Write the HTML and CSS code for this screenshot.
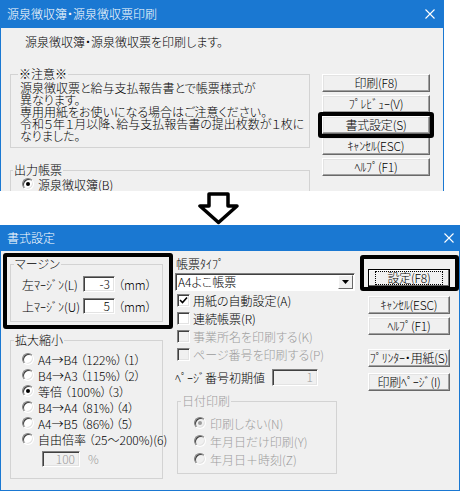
FILE: index.html
```html
<!DOCTYPE html>
<html lang="ja">
  <head>
    <meta charset="UTF-8" />
    <meta name="viewport" content="width=device-width, initial-scale=1.0" />
    <title>書式設定</title>
    <link rel="stylesheet" href="styles.css">
  </head>
  <body>
    <!-- 印刷ダイアログ（上） -->
    <div class="dlg dlg-print">
      <div class="titlebar">
        <span>源泉徴収簿・源泉徴収票印刷</span>
        <svg class="close" width="10" height="10" viewBox="0 0 10 10"><path d="M0.5 0.5L9.5 9.5M9.5 0.5L0.5 9.5" stroke="#fff" stroke-width="1.1"/></svg>
      </div>
      <div class="print-body">
        <p class="lead">源泉徴収簿・源泉徴収票を印刷します。</p>
        <div class="print-left">
          <fieldset class="group notes">
            <legend>※注意※</legend>
            <p>源泉徴収票と給与支払報告書とで帳票様式が<br>異なります。<br>専用用紙をお使いになる場合はご注意ください。<br>令和５年１月以降、給与支払報告書の提出枚数が１枚に<br>なりました。</p>
          </fieldset>
          <fieldset class="group output">
            <legend>出力帳票</legend>
            <div class="opt"><span class="rb on"></span>源泉徴収簿(B)</div>
          </fieldset>
        </div>
        <div class="btns">
          <button class="btn">印刷(F8)</button>
          <button class="btn">ﾌﾟﾚﾋﾞｭｰ(V)</button>
          <button class="btn">書式設定(S)</button>
          <button class="btn">ｷｬﾝｾﾙ(ESC)</button>
          <button class="btn">ﾍﾙﾌﾟ(F1)</button>
        </div>
      </div>
      <div class="mark mark-fmt"></div>
    </div>

    <div class="arrow">
      <svg width="42" height="34" viewBox="0 0 42 34"><path d="M11 3H30V15H39L20.5 31.5L2 15H11Z" fill="#fff" stroke="#000" stroke-width="3.5" stroke-linejoin="round"/></svg>
    </div>

    <!-- 書式設定ダイアログ（下） -->
    <div class="dlg dlg-fmt">
      <div class="titlebar">
        <span>書式設定</span>
        <svg class="close" width="10" height="10" viewBox="0 0 10 10"><path d="M0.5 0.5L9.5 9.5M9.5 0.5L0.5 9.5" stroke="#fff" stroke-width="1.1"/></svg>
      </div>
      <div class="fmt-body">
        <div class="col-left">
          <fieldset class="group margin">
            <legend>マージン</legend>
            <div class="mrow">
              <span class="mlabel">左ﾏｰｼﾞﾝ(L)</span>
              <span class="edit">-3</span>
              <span class="unit">（mm）</span>
            </div>
            <div class="mrow">
              <span class="mlabel">上ﾏｰｼﾞﾝ(U)</span>
              <span class="edit">5</span>
              <span class="unit">（mm）</span>
            </div>
          </fieldset>
          <fieldset class="group scale">
            <legend>拡大縮小</legend>
            <div class="opt"><span class="rb"></span>A4→B4 （122%）（1）</div>
            <div class="opt"><span class="rb"></span>B4→A3 （115%）（2）</div>
            <div class="opt"><span class="rb on"></span>等倍 （100%）（3）</div>
            <div class="opt"><span class="rb"></span>B4→A4 （81%）（4）</div>
            <div class="opt"><span class="rb"></span>A4→B5 （86%）（5）</div>
            <div class="opt"><span class="rb"></span>自由倍率 （25～200%)(6)</div>
            <div class="pct">
              <span class="edit off">100</span>
              <span class="unit off">%</span>
            </div>
          </fieldset>
        </div>

        <div class="col-mid">
          <div class="cap">帳票ﾀｲﾌﾟ</div>
          <div class="select">
            <span class="select-text">A4よこ帳票</span>
            <span class="select-btn"><svg width="7" height="4" viewBox="0 0 7 4"><path d="M0 0H7L3.5 4Z" fill="#000"/></svg></span>
          </div>
          <div class="chk"><span class="cb on"><svg width="9" height="9" viewBox="0 0 9 9"><path d="M1 4L3.5 6.5L8 1.5" fill="none" stroke="#000" stroke-width="1.6"/></svg></span>用紙の自動設定(A)</div>
          <div class="chk"><span class="cb"></span>連続帳票(R)</div>
          <div class="chk off"><span class="cb"></span>事業所名を印刷する(K)</div>
          <div class="chk off"><span class="cb"></span>ページ番号を印刷する(P)</div>
          <div class="pageno">
            <span class="pageno-label">ﾍﾟｰｼﾞ番号初期値</span>
            <span class="edit off">1</span>
          </div>
          <fieldset class="group date off">
            <legend>日付印刷</legend>
            <div class="opt"><span class="rb on"></span>印刷しない(N)</div>
            <div class="opt"><span class="rb"></span>年月日だけ印刷(Y)</div>
            <div class="opt"><span class="rb"></span>年月日＋時刻(Z)</div>
          </fieldset>
        </div>

        <div class="col-right">
          <button class="btn btn-default"><span class="focus">設定(F8)</span></button>
          <button class="btn btn-cancel">ｷｬﾝｾﾙ(ESC)</button>
          <button class="btn btn-help">ﾍﾙﾌﾟ(F1)</button>
          <button class="btn btn-printer">ﾌﾟﾘﾝﾀｰ・用紙(S)</button>
          <button class="btn btn-page">印刷ﾍﾟｰｼﾞ(I)</button>
        </div>
      </div>
      <div class="mark mark-margin"></div>
      <div class="mark mark-ok"></div>
    </div>
  </body>
</html>
```

FILE: styles.css
```css
body {
  margin: 0;
  background-color: #fff;
  font-family: "Noto Sans CJK JP", sans-serif;
  font-size: 12px;
  font-weight: 300;
  color: #000;
  font-feature-settings: "palt";
}
p {
  margin: 0;
}
/* Window frame */
.dlg {
  position: relative;
  box-sizing: border-box;
  background-color: #f0f0f0;
  border: 1px solid #1a78d2;
  border-top: none;
  overflow: hidden;
}
.titlebar {
  display: flex;
  align-items: center;
  justify-content: space-between;
  background-color: #1a78d2;
  color: #fff;
  padding: 0 9px 0 7px;
  margin: 0 -1px;
  line-height: 14px;
}
.close {
  display: block;
}
.dlg-print {
  width: 444px;
  height: 191px;
  border-bottom: none;
}
.dlg-print .titlebar {
  height: 28px;
}
.dlg-fmt {
  width: 460px;
  height: 266px;
}
.dlg-fmt .titlebar {
  height: 26px;
  padding-right: 6px;
}
/* Group boxes */
.group {
  margin: 0;
  min-width: 0;
  border: 1px solid #d3d3d3;
  box-sizing: border-box;
}
.group legend {
  padding: 0 1px;
  line-height: 14px;
}
.opt {
  display: flex;
  align-items: center;
  white-space: nowrap;
}
.rb {
  box-sizing: border-box;
  position: relative;
  width: 12px;
  height: 12px;
  margin-right: 4px;
  border-radius: 50%;
  background-color: #fff;
  border: 1px solid;
  border-color: #808080 #fff #fff #808080;
  box-shadow: inset 1px 1px #404040, inset -1px -1px #e3e3e3;
  flex: none;
}
.rb.on::after {
  content: "";
  position: absolute;
  left: 3px;
  top: 3px;
  width: 4px;
  height: 4px;
  border-radius: 50%;
  background-color: #000;
}
.cb {
  box-sizing: border-box;
  display: flex;
  align-items: center;
  justify-content: center;
  width: 13px;
  height: 13px;
  margin-right: 3px;
  background-color: #fff;
  border: 1px solid;
  border-color: #808080 #fff #fff #808080;
  box-shadow: inset 1px 1px #404040, inset -1px -1px #e3e3e3;
  flex: none;
}
.edit {
  box-sizing: border-box;
  display: block;
  height: 16px;
  background-color: #fff;
  border: 1px solid;
  border-color: #808080 #fff #fff #808080;
  box-shadow: inset 1px 1px #404040, inset -1px -1px #e3e3e3;
  text-align: right;
  padding-right: 4px;
  line-height: 14px;
}
.off,
.off legend,
.off .opt {
  color: #9c9c9c;
}
.edit.off {
  background-color: #f0f0f0;
}
.off .rb,
.off .cb {
  background-color: #f0f0f0;
}
.off .rb.on::after {
  background-color: #9c9c9c;
}
/* Buttons */
.btn {
  box-sizing: border-box;
  display: flex;
  align-items: center;
  justify-content: center;
  height: 18px;
  padding: 0;
  background-color: #f0f0f0;
  border: 1px solid;
  border-color: #fff #696969 #696969 #fff;
  box-shadow: inset -1px -1px #a0a0a0, inset 1px 1px #e3e3e3;
  font: 300 12px "Noto Sans CJK JP", sans-serif;
  font-feature-settings: "palt";
  line-height: 14px;
  color: #000;
  white-space: nowrap;
  letter-spacing: -0.2px;
}
/* Highlight frames */
.mark {
  position: absolute;
  box-sizing: border-box;
  border: 4px solid #000;
  border-radius: 3px;
  pointer-events: none;
}
.mark-fmt {
  left: 317px;
  top: 112px;
  width: 116px;
  height: 26px;
}
.mark-margin {
  left: 2px;
  top: 28px;
  width: 170px;
  height: 76px;
}
.mark-ok {
  left: 359px;
  top: 30px;
  width: 99px;
  height: 36px;
}
/* Upper dialog */
.print-body {
  display: grid;
  grid-template-columns: 300px 108px;
  column-gap: 12px;
  padding: 7px 0 0 9px;
}
.lead {
  grid-column: 1 / -1;
  margin: 0 0 18px 15px;
  line-height: 14px;
}
.notes {
  padding: 1px 4px 5px 9px;
}
.notes legend {
  margin-left: -2px;
}
.notes p {
  line-height: 12px;
  white-space: nowrap;
}
.output {
  margin-top: 15px;
  padding: 0 4px 10px 11px;
}
.output legend {
  margin-left: -9px;
}
.output .opt {
  height: 16px;
  margin-top: -1px;
}
.btns {
  display: flex;
  flex-direction: column;
  gap: 3px;
  margin-top: 7px;
}
.btns .btn {
  width: 108px;
}
/* Lower dialog */
.fmt-body {
  display: grid;
  grid-template-columns: 153px 180px 82px;
  column-gap: 12px;
  padding: 6px 0 0 9px;
}
.col-right {
  margin-left: 1px;
}
.margin {
  padding: 5px 4px 7px 11px;
}
.margin legend,
.scale legend {
  margin-left: -8px;
}
.mrow {
  display: flex;
  align-items: center;
  height: 16px;
}
.mrow + .mrow {
  margin-top: 6px;
}
.mlabel {
  width: 61px;
}
.mrow .edit {
  width: 32px;
}
.unit {
  margin-left: 3px;
}
.scale {
  margin-top: 11px;
  padding: 4px 4px 11px 11px;
}
.scale .opt {
  height: 16px;
}
.pct {
  display: flex;
  align-items: center;
  margin: 3px 0 0 20px;
}
.pct .edit {
  width: 38px;
}
.pct .unit {
  margin-left: 8px;
}
.cap {
  line-height: 14px;
  margin-left: 1px;
}
.select {
  box-sizing: border-box;
  display: flex;
  align-items: center;
  height: 18px;
  margin-top: 2px;
  background-color: #fff;
  border: 1px solid;
  border-color: #808080 #fff #fff #808080;
  box-shadow: inset 1px 1px #404040;
}
.select-text {
  flex: 1;
  padding: 0 0 0 2px;
  line-height: 14px;
}
.select-btn {
  box-sizing: border-box;
  display: flex;
  align-items: center;
  justify-content: center;
  width: 15px;
  height: 14px;
  margin-right: 1px;
  background-color: #f0f0f0;
  border: 1px solid;
  border-color: #fff #696969 #696969 #fff;
}
.chk {
  display: flex;
  align-items: center;
  height: 18px;
  padding-left: 2px;
  white-space: nowrap;
}
.chk:first-of-type {
  margin-top: 3px;
}
.pageno {
  display: flex;
  align-items: center;
  height: 18px;
  margin-top: 5px;
}
.pageno-label {
  width: 97px;
}
.pageno .edit {
  width: 46px;
  height: 17px;
}
.date {
  width: 160px;
  margin: 8px 0 0 2px;
  padding: 6px 4px 5px 16px;
}
.date legend {
  margin-left: -13px;
}
.date .opt {
  height: 18px;
}
.col-right .btn {
  width: 82px;
}
.btn-default {
  margin-top: 12px;
  border-color: #000;
  box-shadow: inset -1px -1px #696969, inset 1px 1px #fff;
}
.focus {
  display: block;
  padding: 0 11px;
  border: 1px dotted #000;
  line-height: 12px;
}
.btn-cancel {
  margin-top: 9px;
}
.btn-help {
  margin-top: 3px;
}
.btn-printer {
  margin-top: 14px;
}
.btn-page {
  margin-top: 6px;
}
/* Arrow between the two windows */
.arrow {
  display: flex;
  height: 34px;
  padding-left: 198px;
}
```
